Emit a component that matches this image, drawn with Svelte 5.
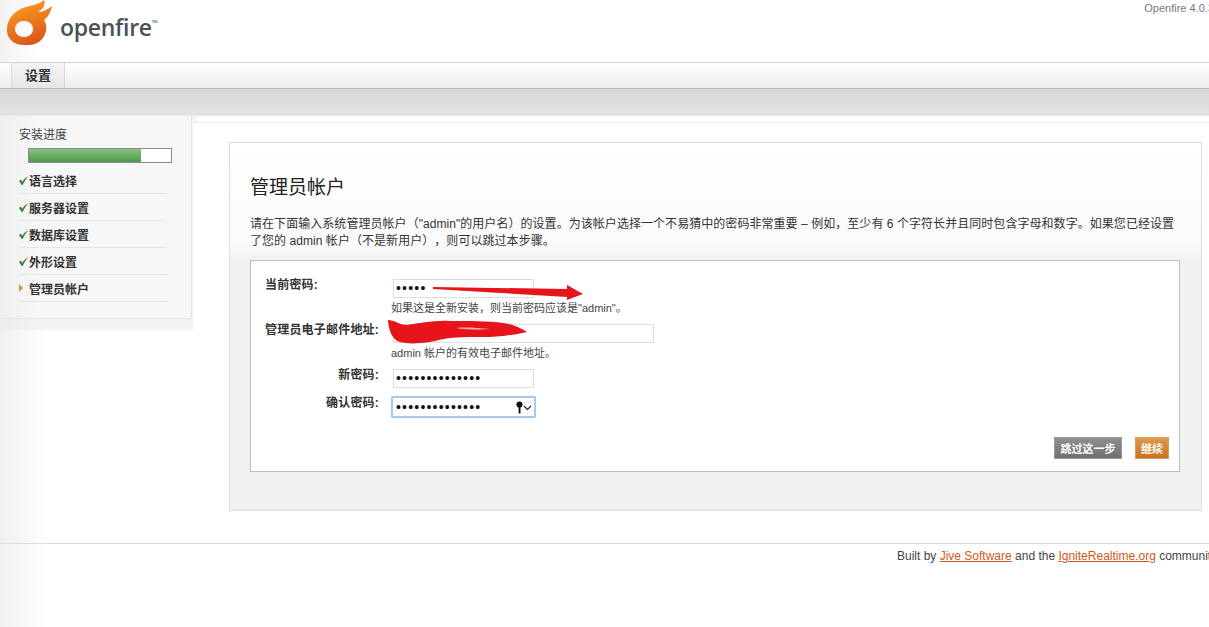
<script>
    const steps = [
        { name: "语言选择", done: true },
        { name: "服务器设置", done: true },
        { name: "数据库设置", done: true },
        { name: "外形设置", done: true },
        { name: "管理员帐户", done: false }
    ];
    const progress = 79;
</script>

<div class="page">
    <header class="header">
        <div class="logo">
            <svg class="logo-mark" width="52" height="47" viewBox="0 0 52 47" aria-hidden="true">
                <defs>
                    <linearGradient id="flame" x1="0.2" y1="0" x2="0.6" y2="1">
                        <stop offset="0" stop-color="#f7a11f" />
                        <stop offset="0.5" stop-color="#ef7a1d" />
                        <stop offset="1" stop-color="#d9541c" />
                    </linearGradient>
                </defs>
                <path fill="url(#flame)" fill-rule="evenodd" d="M44 0c2 5-1 9-6 12 4 0 9-2 14-6-1 6-4 11-8 14 2 3 3 7 2 11-2 9-10 15-19 14C13 46 6 38 7 28 8 17 16 10 26 7c7-2 14-3 18-7zM24 21c-5 0-9 3.500-9 8s4 8 9 8 9-3.500 9-8-4-8-9-8z" />
            </svg>
            <span class="wordmark">openfire<sup>™</sup></span>
        </div>
        <div class="version">Openfire 4.0.3</div>
    </header>

    <nav class="tabs">
        <span class="tab">设置</span>
    </nav>
    <div class="subnav"></div>

    <div class="body">
        <aside class="sidebar">
            <div class="sidebar-inner">
                <h4>安装进度</h4>
                <div class="bar"><div class="bar-fill" style="width: {progress}%"></div></div>
                <ul>
                    {#each steps as step}
                        <li>
                            {#if step.done}
                                <svg class="check" width="10" height="11" viewBox="0 0 11 11" aria-hidden="true">
                                    <path d="M0 6l2-1.500 1.500 2.500C5 4.500 7.500 2 10.500 .5 8 3 5.500 7 4 10.500H3z" fill="#3f7f43" />
                                </svg>
                            {:else}
                                <span class="current"></span>
                            {/if}
                            {step.name}
                        </li>
                    {/each}
                </ul>
            </div>
        </aside>

        <main class="content">
            <section class="card">
                <h1>管理员帐户</h1>
                <p class="intro">请在下面输入系统管理员帐户（"admin"的用户名）的设置。为该帐户选择一个不易猜中的密码非常重要 – 例如，至少有 6 个字符长并且同时包含字母和数字。如果您已经设置了您的 admin 帐户（不是新用户），则可以跳过本步骤。</p>

                <div class="panel">
                    <div class="form">
                        <label class="wide">当前密码:</label>
                        <div class="field with-hint">
                            <div class="input short">•••••</div>
                            <div class="hint">如果这是全新安装，则当前密码应该是"admin"。</div>
                        </div>
                        <label class="wide">管理员电子邮件地址:</label>
                        <div class="field with-hint">
                            <div class="input long"></div>
                            <div class="hint">admin 帐户的有效电子邮件地址。</div>
                        </div>
                        <label>新密码:</label>
                        <div class="field">
                            <div class="input short">••••••••••••••</div>
                        </div>
                        <label>确认密码:</label>
                        <div class="field">
                            <div class="input short focused">
                                ••••••••••••••
                                <svg class="key" width="18" height="13" viewBox="0 0 18 13" aria-hidden="true">
                                    <circle cx="3.500" cy="3.500" r="3.100" fill="#111" />
                                    <rect x="2.600" y="5" width="1.900" height="7.500" fill="#111" />
                                    <path d="M8 5l3.500 3.500L15 5" fill="none" stroke="#222" stroke-width="1.200" />
                                </svg>
                            </div>
                        </div>
                    </div>
                    <div class="actions">
                        <button type="button" class="btn skip">跳过这一步</button>
                        <button type="button" class="btn next">继续</button>
                    </div>

                    <!-- red marks painted over the screenshot -->
                    <svg class="marks" width="340" height="90" viewBox="0 0 340 90" aria-hidden="true">
                        <path d="M182 26l134 2 0-4 16 9-16 6 0-3-134-8z" fill="#e8141c" />
                        <path d="M137 59c6 0 12 5 19 5 14-2 28-5 43-4 18 0 38 0 53 2 9 1 18 5 24 9-8 2-16 3-24 4-18 2-36 0-53 2-10 1-20 5-30 5-9 1-18 0-23-2-4-3-6-7-7-10-1-4-2-7-2-11z" fill="#e8141c" />
                        <path d="M205 67c10-1 22 0 34 1-12 1-24 1-34-1z" fill="#f7a8a0" />
                    </svg>
                </div>
            </section>
        </main>
    </div>

    <footer class="footer">
        Built by <a href="#top">Jive Software</a> and the <a href="#top">IgniteRealtime.org</a> community
    </footer>
</div>

<style>
    :global(body) {
        margin: 0;
        background: #fff;
        overflow: hidden;
    }

    .page {
        width: 1209px;
        height: 627px;
        overflow: hidden;
        font-family: "Liberation Sans", "Noto Sans CJK SC", sans-serif;
        font-size: 12px;
        color: #333;
        background: linear-gradient(to right, #f0f0f0, #fff 50px);
    }

    .header {
        height: 62px;
        display: flex;
        justify-content: space-between;
        background: linear-gradient(to right, #f2f2f2, #fff 40px);
    }

    .logo {
        display: flex;
        align-items: flex-start;
    }

    .logo-mark {
        flex: none;
    }

    .wordmark {
        margin: 10px 0 0 8px;
        font-family: "Open Sans", sans-serif;
        font-size: 23px;
        font-weight: 600;
        letter-spacing: -0.3px;
        line-height: 34px;
        color: #4a5354;
    }

    .wordmark sup {
        font-size: 8px;
        font-weight: 400;
        line-height: 0;
        vertical-align: 10px;
    }

    .version {
        margin: 2px -5px 0 0;
        font-size: 11px;
        color: #777;
        white-space: nowrap;
    }

    .tabs {
        height: 25px;
        padding-left: 11px;
        display: flex;
        border-top: 1px solid #d2d2d2;
        border-bottom: 1px solid #bbb;
        background: linear-gradient(#fff, #ececec);
    }

    .tab {
        width: 52px;
        text-align: center;
        line-height: 26px;
        font-size: 13px;
        font-weight: 700;
        color: #333;
        background: linear-gradient(#f4f4f4, #e6e6e6);
        border-left: 1px solid #d8d8d8;
        border-right: 1px solid #d8d8d8;
    }

    .subnav {
        height: 26px;
        background: linear-gradient(#d8d8d8, #e2e2e2);
        border-bottom: 1px solid #e8e8e8;
    }

    .body {
        display: flex;
        align-items: flex-start;
    }

    .sidebar {
        flex: none;
        width: 197px;
        height: 214px;
        background: linear-gradient(to right, #ececec, #f3f3f3 40px);
    }

    .sidebar-inner {
        width: 192px;
        height: 203px;
        box-sizing: border-box;
        padding: 12px 24px 0 19px;
        background: linear-gradient(to right, #efefef, #f7f7f7 40px);
        border-right: 1px solid #e6e6e6;
        border-bottom: 1px solid #e6e6e6;
    }

    .sidebar h4 {
        margin: 0 0 6px;
        font-size: 12px;
        font-weight: 400;
        line-height: 14px;
        color: #444;
    }

    .bar {
        margin-left: 9px;
        width: 144px;
        height: 15px;
        box-sizing: border-box;
        border: 1px solid #8a8a8a;
        background: #fff;
    }

    .bar-fill {
        height: 100%;
        background: linear-gradient(#8cc07f, #4b9a4c);
    }

    .sidebar ul {
        list-style: none;
        margin: 4px 0 0;
        padding: 0;
    }

    .sidebar li {
        height: 26px;
        display: flex;
        align-items: center;
        border-bottom: 1px solid #e6e6e6;
        font-weight: 700;
        font-size: 12px;
        color: #333;
    }

    .check {
        flex: none;
    }

    .current {
        flex: none;
        width: 0;
        height: 0;
        margin: 0 6px 0 0;
        border-left: 4px solid #c99a2e;
        border-top: 4px solid transparent;
        border-bottom: 4px solid transparent;
    }

    .content {
        flex: 1;
        margin: 6px 0 0 -4px;
        padding: 19px 7px 0 36px;
        background: #fff;
        border-top: 1px solid #eee;
    }

    .card {
        height: 369px;
        box-sizing: border-box;
        padding: 33px 21px 0 20px;
        border: 1px solid #ddd;
        background: linear-gradient(#fff, #fafafa 100px, #f1f1f1 118px);
    }

    .card h1 {
        margin: 0;
        font-size: 19px;
        font-weight: 400;
        line-height: 24px;
        color: #222;
    }

    .intro {
        margin: 16px 0 10px;
        font-size: 12px;
        line-height: 17px;
        letter-spacing: 0.05px;
        text-spacing-trim: space-all;
        color: #333;
    }

    .panel {
        position: relative;
        height: 212px;
        box-sizing: border-box;
        padding: 18px 10px 0 14px;
        border: 1px solid #bbb;
        background: #fff;
    }

    .form {
        display: grid;
        grid-template-columns: 114px 1fr;
        column-gap: 14px;
    }

    .form label {
        margin-top: -1px;
        text-align: right;
        font-weight: 700;
        font-size: 12px;
        line-height: 15px;
        letter-spacing: 0.2px;
        white-space: nowrap;
        color: #333;
    }

    .form label.wide {
        text-align: left;
    }

    .field {
        min-height: 28px;
    }

    .with-hint {
        min-height: 45px;
    }

    .input {
        height: 19px;
        box-sizing: border-box;
        border: 1px solid #ddd;
        padding-left: 2px;
        font-size: 14px;
        line-height: 17px;
        letter-spacing: 1.2px;
        color: #111;
        background: #fff;
        position: relative;
    }

    .short {
        width: 141px;
    }

    .long {
        width: 261px;
    }

    .focused {
        height: 22px;
        width: 145px;
        margin: -1px 0 0 -2px;
        padding-left: 3px;
        border: 2px solid #a9c8ec;
        border-radius: 2px;
        box-shadow: 0 0 1px #a9c8ec;
        line-height: 18px;
    }

    .key {
        position: absolute;
        right: 0;
        top: 3px;
    }

    .hint {
        margin: 3px 0 0 -2px;
        font-size: 11px;
        line-height: 15px;
        letter-spacing: 0;
        color: #444;
    }

    .actions {
        position: absolute;
        right: 10px;
        bottom: 12px;
        display: flex;
        gap: 13px;
    }

    .btn {
        height: 22px;
        padding: 0;
        font-family: inherit;
        font-size: 11px;
        font-weight: 700;
        color: #fff;
        border: 1px solid #9a9a9a;
    }

    .skip {
        width: 68px;
        background: linear-gradient(#8f8f8f, #6f6f6f);
    }

    .next {
        width: 34px;
        border-color: #d0a060;
        background: linear-gradient(#dd9a4e, #c9741d);
    }

    .marks {
        position: absolute;
        left: 0;
        top: 0;
    }

    .footer {
        margin-top: 32px;
        padding: 5px 0 0 897px;
        border-top: 1px solid #ddd;
        font-size: 12px;
        line-height: 14px;
        color: #444;
        white-space: nowrap;
    }

    .footer a {
        color: #d4561b;
    }
</style>
